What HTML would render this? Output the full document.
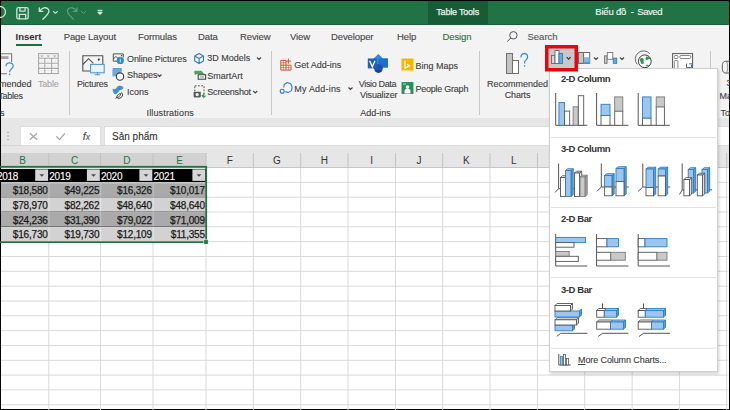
<!DOCTYPE html>
<html><head><meta charset="utf-8">
<style>
html,body{margin:0;padding:0;}
body{width:730px;height:410px;position:relative;overflow:hidden;background:#000;font-family:"Liberation Sans",sans-serif;}
.a{position:absolute;}
.t{position:absolute;white-space:nowrap;font-family:"Liberation Sans",sans-serif;line-height:1;-webkit-text-stroke:0.12px;}
svg{position:absolute;left:0;top:0;overflow:visible;}
</style></head><body>

<div class="a" style="left:1px;top:1px;width:728px;height:408px;background:#fff;"></div>
<div class="a" style="left:1px;top:1px;width:728px;height:23.8px;background:#217346;"></div>
<div class="a" style="left:428px;top:1px;width:60px;height:23.8px;background:#185c37;"></div>
<div class="a" style="left:1px;top:23.8px;width:728px;height:1px;background:#1a6038;"></div>
<div class="a" style="left:1px;top:24.8px;width:728px;height:93.2px;background:#f3f3f3;"></div>
<div class="a" style="left:1px;top:25px;width:728px;height:1px;background:#fafdfb;"></div>
<div class="a" style="left:1px;top:118px;width:728px;height:49px;background:#e6e6e6;"></div>
<div class="t" style="left:436.3px;top:7.80px;font-size:9px;color:#e9f2ec;letter-spacing:-0.2px;-webkit-text-stroke:0.25px #e9f2ec;">Table Tools</div>
<div class="t" style="left:595.3px;top:6.55px;font-size:9.5px;color:#f4f8f5;letter-spacing:-0.2px;">Biểu đồ</div>
<div class="t" style="left:630.8px;top:6.55px;font-size:9.5px;color:#f4f8f5;">-</div>
<div class="t" style="left:637.3px;top:6.55px;font-size:9.5px;color:#f4f8f5;letter-spacing:-0.45px;">Saved</div>
<svg width="730" height="410" viewBox="0 0 730 410">
<g fill="none" stroke="#cde6d6" stroke-width="1.3" stroke-linejoin="round" stroke-linecap="round">
 <circle cx="0" cy="12" r="5.5"/>
 <rect x="16.8" y="7.7" width="11.4" height="11.2" rx="1.6"/>
 <path d="M19.9 7.9v3.2h5.2v-3.2 M19.3 18.7v-4.3h6.4v4.3"/>
 <path d="M39.3 7.8v3.5h3.6 M39.8 10.9c2.3-3.2 5.8-4 8-2.2c2.2 1.8 1.5 4.8-5 10.5"/>
 <path d="M53.4 11.5l2 1.8 2-1.8" stroke-width="1.1"/>
</g>
<g fill="none" stroke="#5f9f7c" stroke-width="1.2" stroke-linejoin="round" stroke-linecap="round">
 <path d="M77 7.8v3.5h-3.6 M76.5 10.9c-2.3-3.2-5.8-4-8-2.2c-2.2 1.8-1.5 4.8 5 10.5"/>
 <path d="M81.5 11.5l2 1.8 2-1.8" stroke-width="1"/>
</g>
<path d="M97.5 10.3h5 M97.8 12.2h4.4l-2.2 2.4z" stroke="#e8f1ec" fill="#e8f1ec" stroke-width="1"/>
</svg>
<div class="t" style="left:15.6px;top:31.75px;font-size:9.5px;color:#303030;font-weight:bold;letter-spacing:0px;-webkit-text-stroke:0;">Insert</div>
<div class="t" style="left:63.7px;top:31.55px;font-size:9.5px;color:#444;letter-spacing:-0.1px;">Page Layout</div>
<div class="t" style="left:138px;top:31.55px;font-size:9.5px;color:#444;letter-spacing:-0.1px;">Formulas</div>
<div class="t" style="left:198px;top:31.55px;font-size:9.5px;color:#444;letter-spacing:-0.1px;">Data</div>
<div class="t" style="left:240px;top:31.55px;font-size:9.5px;color:#444;letter-spacing:-0.1px;">Review</div>
<div class="t" style="left:290px;top:31.55px;font-size:9.5px;color:#444;letter-spacing:-0.1px;">View</div>
<div class="t" style="left:331px;top:31.55px;font-size:9.5px;color:#444;letter-spacing:-0.1px;">Developer</div>
<div class="t" style="left:397px;top:31.55px;font-size:9.5px;color:#444;letter-spacing:-0.1px;">Help</div>
<div class="t" style="left:442.5px;top:31.55px;font-size:9.5px;color:#217346;letter-spacing:-0.1px;">Design</div>
<div class="a" style="left:15.8px;top:44px;width:26.6px;height:2px;background:#1d6b40;"></div>
<svg width="730" height="410"><g fill="none" stroke="#555" stroke-width="1"><circle cx="513.4" cy="35.3" r="3.7"/><path d="M510.8 38l-3.6 3.6"/></g></svg>
<div class="t" style="left:527.5px;top:32.25px;font-size:9.5px;color:#555;letter-spacing:0px;">Search</div>
<svg width="730" height="410"><g stroke="#c8c8c8" stroke-width="1">
<path d="M69.5 51v64 M271.5 51v64 M479.5 51v64 M710.5 51v64"/></g></svg>
<svg width="730" height="410">
<g fill="none" stroke="#7a7a7a" stroke-width="1.1"><path d="M1 53.8H11.6V62 M1 73.8H7"/></g>
<rect x="1" y="56.2" width="7.5" height="2.8" fill="#a3a3a3"/>
<path d="M6 66.3c0-2.3 1.6-3.5 3.6-3.5s3.6 1.3 3.6 3.2c0 2.6-3.6 3.2-3.6 5.6v0.6" fill="none" stroke="#3d8fd1" stroke-width="1.2"/>
<circle cx="9.6" cy="74.4" r="0.8" fill="#3d8fd1"/>
</svg>
<div class="t" style="left:-1px;top:79.90px;font-size:9px;color:#404040;">mended</div>
<div class="t" style="left:-1.8px;top:91.90px;font-size:9px;color:#404040;letter-spacing:-0.25px;">Tables</div>
<div class="t" style="left:0px;top:109.30px;font-size:9px;color:#404040;">s</div>
<svg width="730" height="410">
<rect x="38.6" y="58.3" width="19.6" height="15.2" fill="#fbfbfb"/>
<g fill="none" stroke="#e0e0e0" stroke-width="0.5"><path d="M38.6 60.8h19.6 M38.6 65.8h19.6 M38.6 70.9h19.6 M41.7 58.3v15.2 M48.1 58.3v15.2 M55 58.3v15.2"/></g>
<g fill="none" stroke="#a8a8a8" stroke-width="1.1">
<rect x="38.6" y="53.6" width="19.6" height="19.9"/>
<path d="M38.6 58.3h19.6 M38.6 63.3h19.6 M38.6 68.4h19.6 M44.8 58.3v15.2 M51.6 58.3v15.2"/></g>
<g fill="#a8a8a8"><path d="M40.3 55.5h3.2l-1.6 1.8z M46.6 55.5h3.2l-1.6 1.8z M53.2 55.5h3.2l-1.6 1.8z"/></g></svg>
<div class="t" style="left:37.9px;top:79.90px;font-size:9px;color:#a6a6a6;letter-spacing:-0.15px;">Table</div>
<svg width="730" height="410">
<g fill="none" stroke="#505050" stroke-width="1.1"><path d="M90 71H82.8V55.8H102.8V64"/><path d="M82.8 64.5l5.8-5.8 4.8 4.6"/></g>
<circle cx="98.8" cy="59.6" r="1.1" fill="#333"/>
<rect x="90.6" y="64.4" width="13.6" height="8.4" fill="#eaf3fb" stroke="#4d9ad8" stroke-width="1.1"/>
<path d="M97.4 72.8v1.8 M94.6 74.8h5.6" stroke="#4d9ad8" stroke-width="1.1" fill="none"/>
</svg>
<div class="t" style="left:77px;top:79.90px;font-size:9px;color:#404040;letter-spacing:-0.2px;">Pictures</div>
<svg width="730" height="410">
<g fill="none" stroke="#505050" stroke-width="1"><path d="M118 61.2h-4.7V53.9h10v3.5"/><path d="M113.3 59l2.6-2.6 1.8 1.8"/></g>
<circle cx="121.6" cy="55.6" r="0.7" fill="#333"/>
<circle cx="120.3" cy="60.4" r="3.6" fill="#2b88d8"/><path d="M120.3 59.2v3.2 M120.3 57.6v0.6" stroke="#fff" stroke-width="0.9"/>
<path d="M113 76.3V68.6h8.2v3" fill="#5ea3e0" stroke="#2e7dc4" stroke-width="0.8"/>
<rect x="113" y="68.6" width="7.6" height="7.6" fill="#6aaae3"/>
<circle cx="120" cy="76.6" r="3.7" fill="#fff" stroke="#3f3f3f" stroke-width="1.1"/>
<path d="M112.8 89.2c1.6 0.6 3.2 0.2 3.9-1.2c0.8-1.6 2.2-2.3 3.8-1.9c1.2 0.3 2.2 0.9 2.9 1.8l-1.9 1.6c-1.2-0.2-2.2 0.4-2.8 1.4c-1 1.8-2.6 3-4.4 3c-0.6-1.3-1.2-2.8-1.5-4.7z" fill="#3b8fd8" stroke="#2b7cc8" stroke-width="0.5"/>
<path d="M121.6 92.4a3.4 3.4 0 1 1-5.2 4.8" fill="none" stroke="#444" stroke-width="1"/>
<path d="M116.5 97.8c0.3-2.4 2-4 4.3-4.3c-0.3 2.3-2 4-4.3 4.3z M115.6 98.6l2-2" fill="none" stroke="#444" stroke-width="0.9"/>
</svg>
<div class="t" style="left:127px;top:54.90px;font-size:9px;color:#404040;letter-spacing:-0.1px;">Online Pictures</div>
<div class="t" style="left:127px;top:71.40px;font-size:9px;color:#404040;">Shapes</div>
<div class="t" style="left:127px;top:88.20px;font-size:9px;color:#404040;">Icons</div>
<div class="t" style="left:146.5px;top:109.30px;font-size:9px;color:#404040;letter-spacing:0.15px;">Illustrations</div>
<svg width="730" height="410"><path d="M157.5 74.5l2 2 2-2" fill="none" stroke="#444" stroke-width="1.15"/></svg>
<svg width="730" height="410">
<g fill="none" stroke="#2e7dc4" stroke-width="1.1" stroke-linejoin="round"><path d="M199.1 53.4l4.4 2.5v5l-4.4 2.5-4.4-2.5v-5z M194.7 55.9l4.4 2.5 4.4-2.5 M199.1 58.4v5"/></g>
<path d="M194.3 70.8h7.2l2.8 3.3h-7z" fill="#3fae5a"/>
<path d="M194.3 70.8l3 3.3-2.6 0.6z" fill="#2f8f47"/>
<rect x="198.2" y="74.7" width="7.4" height="4.5" fill="#fff" stroke="#454545" stroke-width="1.1"/>
<path d="M199.8 77h4.2" stroke="#666" stroke-width="0.8"/>
<rect x="194.8" y="85.8" width="9.2" height="9.6" fill="none" stroke="#555" stroke-width="1" stroke-dasharray="1.8 1.4"/>
<rect x="193.6" y="91.8" width="7.2" height="5.6" rx="0.8" fill="#5a5a5a"/>
<circle cx="197.2" cy="94.6" r="1.6" fill="#f3f3f3"/>
<path d="M203.8 93v4.3 M202 95.6l1.8 1.8 1.8-1.8" stroke="#2f9f4f" stroke-width="1.1" fill="none"/>
</svg>
<div class="t" style="left:207.3px;top:54.40px;font-size:9px;color:#404040;">3D Models</div>
<svg width="730" height="410"><path d="M257 57.5l2 2 2-2" fill="none" stroke="#444" stroke-width="1.15"/></svg>
<div class="t" style="left:207.3px;top:71.70px;font-size:9px;color:#404040;">SmartArt</div>
<div class="t" style="left:207.3px;top:88.20px;font-size:9px;color:#404040;letter-spacing:-0.2px;">Screenshot</div>
<svg width="730" height="410"><path d="M253.3 91l2 2 2-2" fill="none" stroke="#444" stroke-width="1.15"/></svg>
<svg width="730" height="410">
<g fill="none" stroke="#d35230" stroke-width="1"><path d="M280.8 60.4h5.2v4.8h5v4.9h-10.2z M280.8 65.2h5.2v4.9"/><path d="M283.4 60.4v9.7 M280.8 62.8h5.2 M280.8 67.6h10.2 M288.5 65.2v4.9" stroke-width="0.6"/><path d="M288.4 58.6v5 M285.9 61.1h5"/></g>
<g fill="none" stroke="#2b7cd0" stroke-width="1.1" stroke-linejoin="round"><path d="M283.8 87.5l0.4-3 3-2 3.6 1.2 1.3 3.5-0.6 3.4-3 1.8-3.4-0.6"/><circle cx="282.2" cy="91.2" r="2"/></g>
<path d="M373.5 58.6l4.9-4.6 4.6 4.6h5v8.8h-5l-4.6 4.6-4.9-4.6z" fill="#2f8ae0"/>
<path d="M378.4 58.6h9.6v8.8h-5l-4.6 4.6z" fill="#1f6fc8"/>
<circle cx="378.4" cy="68.3" r="4.3" fill="#1d52a8"/>
<path d="M374.5 70.2a4.3 4.3 0 0 0 8 0z" fill="#163f8a"/>
<rect x="367.8" y="58.5" width="8.9" height="9.9" fill="#1f5fbf"/>
<path d="M369.6 60.8l2.7 6 2.7-6" fill="none" stroke="#fff" stroke-width="1.3"/>
<rect x="401.5" y="58.5" width="12" height="12" fill="#f5b800"/>
<path d="M405 60.8v7.5l4.5-2.5-2.5-1.5" fill="none" stroke="#fff" stroke-width="1.3"/>
<rect x="401.5" y="82" width="12" height="12" fill="#21a366"/>
<rect x="402" y="82.5" width="11" height="11" fill="#2e8b57"/>
<circle cx="407.5" cy="87" r="1.8" fill="#fff"/><path d="M404.5 93.5v-2.5c0-1.5 1.3-2.5 3-2.5s3 1 3 2.5v2.5z" fill="#fff"/>
<path d="M403 84h3" stroke="#cfe" stroke-width="0.8"/>
</svg>
<div class="t" style="left:294.3px;top:61.30px;font-size:9px;color:#404040;">Get Add-ins</div>
<div class="t" style="left:294.3px;top:85.10px;font-size:9px;color:#404040;letter-spacing:0.2px;">My Add-ins</div>
<svg width="730" height="410"><path d="M348.5 87.5l2 2 2-2" fill="none" stroke="#444" stroke-width="1.15"/></svg>
<div class="t" style="left:358.8px;top:79.60px;font-size:9px;color:#404040;letter-spacing:-0.35px;">Visio Data</div>
<div class="t" style="left:360px;top:91.30px;font-size:9px;color:#404040;letter-spacing:-0.15px;">Visualizer</div>
<div class="t" style="left:360.2px;top:109.30px;font-size:9px;color:#404040;">Add-ins</div>
<div class="t" style="left:415.6px;top:61.70px;font-size:9px;color:#404040;">Bing Maps</div>
<div class="t" style="left:415.6px;top:85.10px;font-size:9px;color:#404040;letter-spacing:-0.25px;">People Graph</div>
<svg width="730" height="410">
<rect x="506.5" y="53.5" width="6" height="20" fill="#c4c4c4" stroke="#707070" stroke-width="1"/>
<rect x="512.5" y="60.5" width="6" height="13" fill="#fff" stroke="#707070" stroke-width="1"/>
<path d="M521 57.5c0-2.5 1.5-3.8 3.3-3.8s3.3 1.3 3.3 3.5c0 2.5-3 2.8-3 5v1.2 M524.6 65.2v1.5" fill="none" stroke="#2e8ad8" stroke-width="1.2"/>
</svg>
<div class="t" style="left:487px;top:79.60px;font-size:9px;color:#404040;">Recommended</div>
<div class="t" style="left:504.7px;top:91.30px;font-size:9px;color:#404040;letter-spacing:-0.15px;">Charts</div>
<svg width="730" height="410">
<rect x="578.5" y="52.5" width="11.2" height="10.8" fill="#fff" stroke="#6a6a6a" stroke-width="1"/>
<rect x="578.5" y="52.5" width="5" height="10.8" fill="#c6c6c6" stroke="#6a6a6a" stroke-width="1"/>
<rect x="583.8" y="57.2" width="5.6" height="5.8" fill="#7fb8ea"/>
<path d="M583.8 63h5.9" stroke="#3a8ad6" stroke-width="1.2"/>
<rect x="604.5" y="55.8" width="2.6" height="7.5" fill="#c6c6c6" stroke="#777" stroke-width="0.9"/>
<rect x="607.3" y="52.5" width="5.5" height="6.8" fill="#fff" stroke="#777" stroke-width="0.9"/>
<rect x="613.3" y="58.2" width="3.4" height="5.1" fill="#6aaae3" stroke="#2e7dc4" stroke-width="0.9"/>
<path d="M637.3 64.5a8 8 0 0 1 12.5-10.8" fill="none" stroke="#6a6a6a" stroke-width="1"/>
<circle cx="644.8" cy="61.3" r="6.4" fill="#fff" stroke="#3a3a3a" stroke-width="1"/>
<path d="M640.2 58.6c1.2-1 2.8-1 3.4 0.3c0.5 1-0.6 2.1 0.1 3c0.6 0.8-0.2 2.2-1.3 2.2c-1 0-1.3-1.3-1.8-2.2c-0.5-1-1.4-2-0.4-3.3z" fill="#2c9a4c"/>
<path d="M646 56.5c1.6-0.3 3.4 0.5 4.2 2.2c-0.8 0.6-2 0.2-2.6 1c-0.5 0.6-1.8 0.3-2-0.8c-0.2-0.9 0.6-1.2 0.4-2.4z" fill="#2c9a4c"/>
<path d="M645.5 65.3c1-0.8 2.8-0.8 3.6 0.3c-0.9 0.9-2.4 1.2-3.6-0.3z" fill="#2c9a4c"/>
<rect x="672.6" y="53.6" width="20" height="16" fill="#fff" stroke="#555" stroke-width="1"/>
<g fill="none" stroke="#777" stroke-width="0.9"><rect x="674.3" y="55.5" width="3.6" height="3" rx="0.8"/><rect x="679.8" y="55.5" width="11" height="3" rx="1.2"/><rect x="674.3" y="60.6" width="3.6" height="8" rx="0.8"/></g>
<path d="M686.5 63.5v4h5v-2.5" fill="#fff" stroke="#555" stroke-width="0.9"/>
<path d="M689 63.8h3v3" fill="none" stroke="#2e7dc4" stroke-width="1"/>
<path d="M730 61.3h-4.5c-2.2 0-3.2 1.5-3.2 5.8s1 5.9 3.2 5.9h4.5" fill="none" stroke="#555" stroke-width="1"/>
<path d="M725.5 61.3c1.5 0 2.2 2.5 2.2 5.9s-0.7 5.9-2.2 5.9" fill="none" stroke="#777" stroke-width="0.8"/>
</svg>
<svg width="730" height="410"><path d="M594 57.5l2 2 2-2" fill="none" stroke="#444" stroke-width="1.15"/></svg>
<svg width="730" height="410"><path d="M620 57.5l2 2 2-2" fill="none" stroke="#444" stroke-width="1.15"/></svg>
<div class="t" style="left:726.5px;top:79.40px;font-size:9px;color:#404040;">3</div>
<div class="t" style="left:719.5px;top:91.90px;font-size:9px;color:#404040;">Ma</div>
<div class="t" style="left:720.5px;top:108.90px;font-size:9px;color:#404040;">To</div>
<div class="a" style="left:1px;top:145px;width:728px;height:1px;background:#d6d6d6;"></div>
<div class="a" style="left:19.5px;top:126.4px;width:81px;height:19.6px;background:#fff;border:1px solid #dcdcdc;box-sizing:border-box;"></div>
<div class="a" style="left:103.5px;top:126.4px;width:625.5px;height:19.6px;background:#fff;border:1px solid #dcdcdc;border-right:none;box-sizing:border-box;"></div>
<svg width="730" height="410">
<g fill="#9a9a9a"><circle cx="8" cy="132.5" r="0.7"/><circle cx="8" cy="136" r="0.7"/><circle cx="8" cy="139.5" r="0.7"/></g>
<g fill="none" stroke="#a6a6a6" stroke-width="1.25"><path d="M29.8 133.2l7.2 6.6 M37 133.2l-7.2 6.6"/><path d="M56.3 136.3l3.2 3.3 5.3-6.3"/></g>
</svg>
<div class="t" style="left:82.8px;top:130.80px;font-size:11px;color:#505050;font-family:"Liberation Serif",serif;-webkit-text-stroke:0.25px;"><i>f</i><span style="font-size:8.5px"><i>x</i></span></div>
<div class="t" style="left:112px;top:131.80px;font-size:10px;color:#333;">Sản phẩm</div>
<div class="a" style="left:1px;top:153px;width:205px;height:14.5px;background:#d2d2d2;"></div>
<svg width="730" height="410">
<path d="M48.8 153v14.5" stroke="#c2c2c2" stroke-width="1"/>
<path d="M100.5 153v14.5" stroke="#c2c2c2" stroke-width="1"/>
<path d="M153.0 153v14.5" stroke="#c2c2c2" stroke-width="1"/>
<path d="M206.0 153v14.5" stroke="#c2c2c2" stroke-width="1"/>
<path d="M253.3 153v14.5" stroke="#c2c2c2" stroke-width="1"/>
<path d="M300.7 153v14.5" stroke="#c2c2c2" stroke-width="1"/>
<path d="M348.0 153v14.5" stroke="#c2c2c2" stroke-width="1"/>
<path d="M395.4 153v14.5" stroke="#c2c2c2" stroke-width="1"/>
<path d="M442.7 153v14.5" stroke="#c2c2c2" stroke-width="1"/>
<path d="M490.0 153v14.5" stroke="#c2c2c2" stroke-width="1"/>
<path d="M537.4 153v14.5" stroke="#c2c2c2" stroke-width="1"/>
<path d="M584.7 153v14.5" stroke="#c2c2c2" stroke-width="1"/>
<path d="M632.1 153v14.5" stroke="#c2c2c2" stroke-width="1"/>
<path d="M679.4 153v14.5" stroke="#c2c2c2" stroke-width="1"/>
<path d="M726.7 153v14.5" stroke="#c2c2c2" stroke-width="1"/>
<path d="M1 167.5h728" stroke="#c6c6c6" stroke-width="1"/>
<path d="M48.8 168v242" stroke="#d9d9d9" stroke-width="1"/>
<path d="M100.5 168v242" stroke="#d9d9d9" stroke-width="1"/>
<path d="M153.0 168v242" stroke="#d9d9d9" stroke-width="1"/>
<path d="M206.0 168v242" stroke="#d9d9d9" stroke-width="1"/>
<path d="M253.3 168v242" stroke="#d9d9d9" stroke-width="1"/>
<path d="M300.7 168v242" stroke="#d9d9d9" stroke-width="1"/>
<path d="M348.0 168v242" stroke="#d9d9d9" stroke-width="1"/>
<path d="M395.4 168v242" stroke="#d9d9d9" stroke-width="1"/>
<path d="M442.7 168v242" stroke="#d9d9d9" stroke-width="1"/>
<path d="M490.0 168v242" stroke="#d9d9d9" stroke-width="1"/>
<path d="M537.4 168v242" stroke="#d9d9d9" stroke-width="1"/>
<path d="M584.7 168v242" stroke="#d9d9d9" stroke-width="1"/>
<path d="M632.1 168v242" stroke="#d9d9d9" stroke-width="1"/>
<path d="M679.4 168v242" stroke="#d9d9d9" stroke-width="1"/>
<path d="M726.7 168v242" stroke="#d9d9d9" stroke-width="1"/>
<path d="M1 182.3h728" stroke="#d9d9d9" stroke-width="1"/>
<path d="M1 197.2h728" stroke="#d9d9d9" stroke-width="1"/>
<path d="M1 212.0h728" stroke="#d9d9d9" stroke-width="1"/>
<path d="M1 226.8h728" stroke="#d9d9d9" stroke-width="1"/>
<path d="M1 241.7h728" stroke="#d9d9d9" stroke-width="1"/>
<path d="M1 256.5h728" stroke="#d9d9d9" stroke-width="1"/>
<path d="M1 271.3h728" stroke="#d9d9d9" stroke-width="1"/>
<path d="M1 286.1h728" stroke="#d9d9d9" stroke-width="1"/>
<path d="M1 301.0h728" stroke="#d9d9d9" stroke-width="1"/>
<path d="M1 315.8h728" stroke="#d9d9d9" stroke-width="1"/>
<path d="M1 330.6h728" stroke="#d9d9d9" stroke-width="1"/>
<path d="M1 345.5h728" stroke="#d9d9d9" stroke-width="1"/>
<path d="M1 360.3h728" stroke="#d9d9d9" stroke-width="1"/>
<path d="M1 375.1h728" stroke="#d9d9d9" stroke-width="1"/>
<path d="M1 389.9h728" stroke="#d9d9d9" stroke-width="1"/>
<path d="M1 404.8h728" stroke="#d9d9d9" stroke-width="1"/>
<path d="M1 419.6h728" stroke="#d9d9d9" stroke-width="1"/>
</svg>
<div class="t" style="left:7.6px;width:30px;text-align:center;top:156.0px;font-size:10px;color:#217346;-webkit-text-stroke:0;">B</div>
<div class="t" style="left:59.7px;width:30px;text-align:center;top:156.0px;font-size:10px;color:#217346;-webkit-text-stroke:0;">C</div>
<div class="t" style="left:111.8px;width:30px;text-align:center;top:156.0px;font-size:10px;color:#217346;-webkit-text-stroke:0;">D</div>
<div class="t" style="left:164.5px;width:30px;text-align:center;top:156.0px;font-size:10px;color:#217346;-webkit-text-stroke:0;">E</div>
<div class="t" style="left:214.7px;width:30px;text-align:center;top:156.0px;font-size:10px;color:#333;-webkit-text-stroke:0;">F</div>
<div class="t" style="left:262.0px;width:30px;text-align:center;top:156.0px;font-size:10px;color:#333;-webkit-text-stroke:0;">G</div>
<div class="t" style="left:309.4px;width:30px;text-align:center;top:156.0px;font-size:10px;color:#333;-webkit-text-stroke:0;">H</div>
<div class="t" style="left:356.7px;width:30px;text-align:center;top:156.0px;font-size:10px;color:#333;-webkit-text-stroke:0;">I</div>
<div class="t" style="left:404.0px;width:30px;text-align:center;top:156.0px;font-size:10px;color:#333;-webkit-text-stroke:0;">J</div>
<div class="t" style="left:451.4px;width:30px;text-align:center;top:156.0px;font-size:10px;color:#333;-webkit-text-stroke:0;">K</div>
<div class="t" style="left:498.7px;width:30px;text-align:center;top:156.0px;font-size:10px;color:#333;-webkit-text-stroke:0;">L</div>
<div class="t" style="left:546.1px;width:30px;text-align:center;top:156.0px;font-size:10px;color:#333;-webkit-text-stroke:0;">M</div>
<svg width="730" height="410">
<rect x="1" y="168" width="205" height="1" fill="#e4e4e4"/>
<rect x="1" y="169" width="205" height="13.2" fill="#000"/>
<rect x="1" y="182.2" width="205" height="1" fill="#c8c8c8"/>
<rect x="1" y="183.2" width="205" height="13.5" fill="#aaaaaa"/>
<rect x="1" y="196.7" width="205" height="1" fill="#6a6a6a"/>
<rect x="1" y="197.7" width="205" height="13.8" fill="#d2d2d2"/>
<rect x="1" y="211.4" width="205" height="1" fill="#6a6a6a"/>
<rect x="1" y="212.3" width="205" height="13.8" fill="#aaaaaa"/>
<rect x="1" y="226.1" width="205" height="1" fill="#6a6a6a"/>
<rect x="1" y="227.1" width="205" height="14.4" fill="#d2d2d2"/>
<rect x="48.5" y="197.7" width="1" height="13.8" fill="#e6e6e6"/>
<rect x="48.5" y="227.1" width="1" height="14.4" fill="#e6e6e6"/>
<rect x="48.5" y="183.2" width="1" height="13.5" fill="#c2c2c2"/>
<rect x="48.5" y="212.4" width="1" height="13.7" fill="#c2c2c2"/>
<rect x="100.2" y="197.7" width="1" height="13.8" fill="#e6e6e6"/>
<rect x="100.2" y="227.1" width="1" height="14.4" fill="#e6e6e6"/>
<rect x="100.2" y="183.2" width="1" height="13.5" fill="#c2c2c2"/>
<rect x="100.2" y="212.4" width="1" height="13.7" fill="#c2c2c2"/>
<rect x="152.7" y="197.7" width="1" height="13.8" fill="#e6e6e6"/>
<rect x="152.7" y="227.1" width="1" height="14.4" fill="#e6e6e6"/>
<rect x="152.7" y="183.2" width="1" height="13.5" fill="#c2c2c2"/>
<rect x="152.7" y="212.4" width="1" height="13.7" fill="#c2c2c2"/>
<rect x="35.2" y="169.4" width="12.9" height="11.5" fill="#d6d6d6"/>
<path d="M39.3 174.2h5l-2.5 2.6z" fill="#4a4a4a"/>
<rect x="86.9" y="169.4" width="12.9" height="11.5" fill="#d6d6d6"/>
<path d="M91.0 174.2h5l-2.5 2.6z" fill="#4a4a4a"/>
<rect x="139.4" y="169.4" width="12.9" height="11.5" fill="#d6d6d6"/>
<path d="M143.5 174.2h5l-2.5 2.6z" fill="#4a4a4a"/>
<rect x="192.4" y="169.4" width="12.9" height="11.5" fill="#d6d6d6"/>
<path d="M196.5 174.2h5l-2.5 2.6z" fill="#4a4a4a"/>
</svg>
<div class="t" style="left:-3.1px;top:172.10px;font-size:10px;color:#fff;letter-spacing:-0.25px;">2018</div>
<div class="t" style="left:49.3px;top:172.10px;font-size:10px;color:#fff;letter-spacing:-0.25px;">2019</div>
<div class="t" style="left:101.0px;top:172.10px;font-size:10px;color:#fff;letter-spacing:-0.25px;">2020</div>
<div class="t" style="left:153.5px;top:172.10px;font-size:10px;color:#fff;letter-spacing:-0.25px;">2021</div>
<div class="t" style="right:682.4px;top:186.4px;font-size:10px;color:#1a1a1a;letter-spacing:-0.2px;-webkit-text-stroke:0.25px #1a1a1a;">$18,580</div>
<div class="t" style="right:630.7px;top:186.4px;font-size:10px;color:#1a1a1a;letter-spacing:-0.2px;-webkit-text-stroke:0.25px #1a1a1a;">$49,225</div>
<div class="t" style="right:578.2px;top:186.4px;font-size:10px;color:#1a1a1a;letter-spacing:-0.2px;-webkit-text-stroke:0.25px #1a1a1a;">$16,326</div>
<div class="t" style="right:525.2px;top:186.4px;font-size:10px;color:#1a1a1a;letter-spacing:-0.2px;-webkit-text-stroke:0.25px #1a1a1a;">$10,017</div>
<div class="t" style="right:682.4px;top:201.0px;font-size:10px;color:#1a1a1a;letter-spacing:-0.2px;-webkit-text-stroke:0.25px #1a1a1a;">$78,970</div>
<div class="t" style="right:630.7px;top:201.0px;font-size:10px;color:#1a1a1a;letter-spacing:-0.2px;-webkit-text-stroke:0.25px #1a1a1a;">$82,262</div>
<div class="t" style="right:578.2px;top:201.0px;font-size:10px;color:#1a1a1a;letter-spacing:-0.2px;-webkit-text-stroke:0.25px #1a1a1a;">$48,640</div>
<div class="t" style="right:525.2px;top:201.0px;font-size:10px;color:#1a1a1a;letter-spacing:-0.2px;-webkit-text-stroke:0.25px #1a1a1a;">$48,640</div>
<div class="t" style="right:682.4px;top:215.6px;font-size:10px;color:#1a1a1a;letter-spacing:-0.2px;-webkit-text-stroke:0.25px #1a1a1a;">$24,236</div>
<div class="t" style="right:630.7px;top:215.6px;font-size:10px;color:#1a1a1a;letter-spacing:-0.2px;-webkit-text-stroke:0.25px #1a1a1a;">$31,390</div>
<div class="t" style="right:578.2px;top:215.6px;font-size:10px;color:#1a1a1a;letter-spacing:-0.2px;-webkit-text-stroke:0.25px #1a1a1a;">$79,022</div>
<div class="t" style="right:525.2px;top:215.6px;font-size:10px;color:#1a1a1a;letter-spacing:-0.2px;-webkit-text-stroke:0.25px #1a1a1a;">$71,009</div>
<div class="t" style="right:682.4px;top:230.2px;font-size:10px;color:#1a1a1a;letter-spacing:-0.2px;-webkit-text-stroke:0.25px #1a1a1a;">$16,730</div>
<div class="t" style="right:630.7px;top:230.2px;font-size:10px;color:#1a1a1a;letter-spacing:-0.2px;-webkit-text-stroke:0.25px #1a1a1a;">$19,730</div>
<div class="t" style="right:578.2px;top:230.2px;font-size:10px;color:#1a1a1a;letter-spacing:-0.2px;-webkit-text-stroke:0.25px #1a1a1a;">$12,109</div>
<div class="t" style="right:525.2px;top:230.2px;font-size:10px;color:#1a1a1a;letter-spacing:-0.2px;-webkit-text-stroke:0.25px #1a1a1a;">$11,355</div>
<svg width="730" height="410"><rect x="-3" y="166.8" width="209.2" height="75.4" fill="none" stroke="#217346" stroke-width="1.8"/>
<rect x="203.8" y="239.8" width="4.4" height="4.4" fill="#217346" stroke="#fff" stroke-width="0.6"/></svg>
<div class="a" style="left:549px;top:67.5px;width:168.5px;height:304.7px;background:#fff;border:1px solid #d0d0d0;box-sizing:border-box;box-shadow:1px 2px 3px rgba(0,0,0,0.18);"></div>
<div class="t" style="left:561px;top:73.55px;font-size:9.5px;color:#333;font-weight:bold;letter-spacing:-0.42px;-webkit-text-stroke:0;">2-D Column</div>
<div class="t" style="left:561px;top:143.75px;font-size:9.5px;color:#333;font-weight:bold;letter-spacing:-0.42px;-webkit-text-stroke:0;">3-D Column</div>
<div class="t" style="left:561px;top:213.75px;font-size:9.5px;color:#333;font-weight:bold;letter-spacing:-0.42px;-webkit-text-stroke:0;">2-D Bar</div>
<div class="t" style="left:561px;top:284.55px;font-size:9.5px;color:#333;font-weight:bold;letter-spacing:-0.42px;-webkit-text-stroke:0;">3-D Bar</div>
<svg width="730" height="410">
<path d="M551 137.5h165" stroke="#e1e1e1" stroke-width="1"/>
<path d="M551 207.5h165" stroke="#e1e1e1" stroke-width="1"/>
<path d="M551 277.5h165" stroke="#e1e1e1" stroke-width="1"/>
<path d="M551 348.2h165" stroke="#e1e1e1" stroke-width="1"/>
<path d="M555.7 93v32.3h31.6" stroke="#555" stroke-width="1" fill="none"/>
<rect x="558.9" y="102.6" width="5.70" height="22.70" fill="#9cc6ee" stroke="#2e7dc4" stroke-width="0.9"/>
<rect x="564.6" y="111.1" width="5.10" height="14.20" fill="#fff" stroke="#555" stroke-width="0.9"/>
<rect x="573.1" y="106.8" width="5.20" height="18.50" fill="#c9c9c9" stroke="#7a7a7a" stroke-width="0.9"/>
<rect x="578.3" y="95.7" width="5.40" height="29.60" fill="#fff" stroke="#555" stroke-width="0.9"/>
<path d="M596.6 93v32.3h31.8" stroke="#555" stroke-width="1" fill="none"/>
<rect x="601" y="115.4" width="9.00" height="9.90" fill="#fff" stroke="#555" stroke-width="0.9"/>
<rect x="601" y="104.3" width="9.00" height="11.10" fill="#9cc6ee" stroke="#2e7dc4" stroke-width="0.9"/>
<rect x="614.7" y="111.1" width="8.10" height="14.20" fill="#fff" stroke="#555" stroke-width="0.9"/>
<rect x="614.7" y="96.9" width="8.10" height="14.20" fill="#c9c9c9" stroke="#7a7a7a" stroke-width="0.9"/>
<path d="M638.2 93v32.3h31.7" stroke="#555" stroke-width="1" fill="none"/>
<rect x="642.5" y="118" width="8.50" height="7.30" fill="#fff" stroke="#555" stroke-width="0.9"/>
<rect x="642.5" y="96.9" width="8.50" height="21.10" fill="#9cc6ee" stroke="#2e7dc4" stroke-width="0.9"/>
<rect x="656.2" y="106.8" width="8.20" height="18.50" fill="#fff" stroke="#555" stroke-width="0.9"/>
<rect x="656.2" y="96.9" width="8.20" height="9.90" fill="#c9c9c9" stroke="#7a7a7a" stroke-width="0.9"/>
<path d="M558.6 163.5v25.2l-3.6 3.8 M558.6 188.7h28.5" stroke="#555" stroke-width="1" fill="none"/>
<path d="M565.5 177.5 l2.2 -1.7600000000000002 V194.64000000000001 l-2.2 1.7600000000000002z" fill="#e0e0e0" stroke="#555" stroke-width="0.9"/>
<path d="M560.5 177.5 l2.2 -1.7600000000000002 H567.7 l-2.2 1.7600000000000002z" fill="#fff" stroke="#555" stroke-width="0.9"/>
<rect x="560.5" y="177.5" width="5.00" height="18.90" fill="#fff" stroke="#555" stroke-width="0.9"/>
<path d="M571 170.5 l2.2 -1.7600000000000002 V194.64000000000001 l-2.2 1.7600000000000002z" fill="#5b9bd5" stroke="#2e7dc4" stroke-width="0.9"/>
<path d="M565.5 170.5 l2.2 -1.7600000000000002 H573.2 l-2.2 1.7600000000000002z" fill="#9cc6ee" stroke="#2e7dc4" stroke-width="0.9"/>
<rect x="565.5" y="170.5" width="5.50" height="25.90" fill="#9cc6ee" stroke="#2e7dc4" stroke-width="0.9"/>
<path d="M579.5 173 l2.2 -1.7600000000000002 V194.64000000000001 l-2.2 1.7600000000000002z" fill="#e0e0e0" stroke="#555" stroke-width="0.9"/>
<path d="M574.5 173 l2.2 -1.7600000000000002 H581.7 l-2.2 1.7600000000000002z" fill="#fff" stroke="#555" stroke-width="0.9"/>
<rect x="574.5" y="173" width="5.00" height="23.40" fill="#fff" stroke="#555" stroke-width="0.9"/>
<path d="M585 177 l2.2 -1.7600000000000002 V194.64000000000001 l-2.2 1.7600000000000002z" fill="#a8a8a8" stroke="#7a7a7a" stroke-width="0.9"/>
<path d="M580 177 l2.2 -1.7600000000000002 H587.2 l-2.2 1.7600000000000002z" fill="#c9c9c9" stroke="#7a7a7a" stroke-width="0.9"/>
<rect x="580" y="177" width="5.00" height="19.40" fill="#c9c9c9" stroke="#7a7a7a" stroke-width="0.9"/>
<path d="M601.3 163.5v23.5l-4.6 4.5 M601.3 187h27.4" stroke="#555" stroke-width="1" fill="none"/>
<path d="M612 175.5 l2.2 -1.7600000000000002 V194.04000000000002 l-2.2 1.7600000000000002z" fill="#5b9bd5" stroke="#2e7dc4" stroke-width="0.9"/>
<path d="M604.6 175.5 l2.2 -1.7600000000000002 H614.2 l-2.2 1.7600000000000002z" fill="#9cc6ee" stroke="#2e7dc4" stroke-width="0.9"/>
<rect x="604.6" y="175.5" width="7.40" height="11.50" fill="#9cc6ee" stroke="#2e7dc4" stroke-width="0.9"/>
<rect x="604.6" y="187" width="7.40" height="8.80" fill="#fff" stroke="#555" stroke-width="0.9"/>
<path d="M624 168.5 l2.2 -1.7600000000000002 V194.04000000000002 l-2.2 1.7600000000000002z" fill="#5b9bd5" stroke="#2e7dc4" stroke-width="0.9"/>
<path d="M616 168.5 l2.2 -1.7600000000000002 H626.2 l-2.2 1.7600000000000002z" fill="#9cc6ee" stroke="#2e7dc4" stroke-width="0.9"/>
<rect x="616" y="168.5" width="8.00" height="13.10" fill="#9cc6ee" stroke="#2e7dc4" stroke-width="0.9"/>
<rect x="616" y="181.6" width="8.00" height="14.20" fill="#fff" stroke="#555" stroke-width="0.9"/>
<path d="M642.8 163.5v23.5l-4.8 4.5 M642.8 187h27.4" stroke="#555" stroke-width="1" fill="none"/>
<path d="M653.5 169 l2.2 -1.7600000000000002 V194.04000000000002 l-2.2 1.7600000000000002z" fill="#5b9bd5" stroke="#2e7dc4" stroke-width="0.9"/>
<path d="M646 169 l2.2 -1.7600000000000002 H655.7 l-2.2 1.7600000000000002z" fill="#9cc6ee" stroke="#2e7dc4" stroke-width="0.9"/>
<rect x="646" y="169" width="7.50" height="18.60" fill="#9cc6ee" stroke="#2e7dc4" stroke-width="0.9"/>
<rect x="646" y="187.6" width="7.50" height="8.20" fill="#fff" stroke="#555" stroke-width="0.9"/>
<path d="M665.5 169 l2.2 -1.7600000000000002 V194.04000000000002 l-2.2 1.7600000000000002z" fill="#5b9bd5" stroke="#2e7dc4" stroke-width="0.9"/>
<path d="M658.1 169 l2.2 -1.7600000000000002 H667.7 l-2.2 1.7600000000000002z" fill="#9cc6ee" stroke="#2e7dc4" stroke-width="0.9"/>
<rect x="658.1" y="169" width="7.40" height="7.00" fill="#9cc6ee" stroke="#2e7dc4" stroke-width="0.9"/>
<rect x="658.1" y="176" width="7.40" height="19.80" fill="#fff" stroke="#555" stroke-width="0.9"/>
<path d="M682.2 163.5v26.5l-2.7 4.5 M682.2 189.8h29.8" stroke="#555" stroke-width="1" fill="none"/>
<path d="M693.5 169.5 l2.2 -1.7600000000000002 V191.24 l-2.2 1.7600000000000002z" fill="#5b9bd5" stroke="#2e7dc4" stroke-width="0.9"/>
<path d="M688.2 169.5 l2.2 -1.7600000000000002 H695.7 l-2.2 1.7600000000000002z" fill="#9cc6ee" stroke="#2e7dc4" stroke-width="0.9"/>
<rect x="688.2" y="169.5" width="5.30" height="23.50" fill="#9cc6ee" stroke="#2e7dc4" stroke-width="0.9"/>
<path d="M707.5 169.5 l2.2 -1.7600000000000002 V191.24 l-2.2 1.7600000000000002z" fill="#5b9bd5" stroke="#2e7dc4" stroke-width="0.9"/>
<path d="M702 169.5 l2.2 -1.7600000000000002 H709.7 l-2.2 1.7600000000000002z" fill="#9cc6ee" stroke="#2e7dc4" stroke-width="0.9"/>
<rect x="702" y="169.5" width="5.50" height="23.50" fill="#9cc6ee" stroke="#2e7dc4" stroke-width="0.9"/>
<path d="M689.5 179.5 l2.2 -1.7600000000000002 V194.04000000000002 l-2.2 1.7600000000000002z" fill="#e0e0e0" stroke="#555" stroke-width="0.9"/>
<path d="M683.9 179.5 l2.2 -1.7600000000000002 H691.7 l-2.2 1.7600000000000002z" fill="#fff" stroke="#555" stroke-width="0.9"/>
<rect x="683.9" y="179.5" width="5.60" height="16.30" fill="#fff" stroke="#555" stroke-width="0.9"/>
<path d="M702.5 175 l2.2 -1.7600000000000002 V194.04000000000002 l-2.2 1.7600000000000002z" fill="#e0e0e0" stroke="#555" stroke-width="0.9"/>
<path d="M697.3 175 l2.2 -1.7600000000000002 H704.7 l-2.2 1.7600000000000002z" fill="#fff" stroke="#555" stroke-width="0.9"/>
<rect x="697.3" y="175" width="5.20" height="20.80" fill="#fff" stroke="#555" stroke-width="0.9"/>
<path d="M555.7 234v32h31.6" stroke="#555" stroke-width="1" fill="none"/>
<rect x="555.7" y="237.4" width="29.90" height="5.20" fill="#9cc6ee" stroke="#2e7dc4" stroke-width="0.9"/>
<rect x="555.7" y="242.6" width="18.30" height="4.60" fill="#fff" stroke="#555" stroke-width="0.9"/>
<rect x="555.7" y="251.5" width="13.50" height="4.80" fill="#c9c9c9" stroke="#7a7a7a" stroke-width="0.9"/>
<rect x="555.7" y="256.3" width="22.60" height="5.10" fill="#fff" stroke="#555" stroke-width="0.9"/>
<path d="M596.6 234v32h31.8" stroke="#555" stroke-width="1" fill="none"/>
<rect x="596.6" y="238.6" width="10.40" height="8.20" fill="#fff" stroke="#555" stroke-width="0.9"/>
<rect x="607" y="238.6" width="11.50" height="8.20" fill="#9cc6ee" stroke="#2e7dc4" stroke-width="0.9"/>
<rect x="596.6" y="252.3" width="14.20" height="7.90" fill="#fff" stroke="#555" stroke-width="0.9"/>
<rect x="610.8" y="252.3" width="14.50" height="7.90" fill="#c9c9c9" stroke="#7a7a7a" stroke-width="0.9"/>
<path d="M638.2 234v32h31.7" stroke="#555" stroke-width="1" fill="none"/>
<rect x="638.2" y="238.6" width="6.80" height="8.20" fill="#fff" stroke="#555" stroke-width="0.9"/>
<rect x="645" y="238.6" width="22.00" height="8.20" fill="#9cc6ee" stroke="#2e7dc4" stroke-width="0.9"/>
<rect x="638.2" y="252.3" width="18.80" height="7.90" fill="#fff" stroke="#555" stroke-width="0.9"/>
<rect x="657" y="252.3" width="10.00" height="7.90" fill="#c9c9c9" stroke="#7a7a7a" stroke-width="0.9"/>
<path d="M560.7 333.3h26.7 M560.7 333.3l-3.9 3" stroke="#555" stroke-width="1" fill="none"/>
<path d="M572.5 325 l2 -2 V328.8 l-2 2z" fill="#5b9bd5" stroke="#2e7dc4" stroke-width="0.9"/>
<rect x="555" y="325" width="17.50" height="5.80" fill="#9cc6ee" stroke="#2e7dc4" stroke-width="0.9"/>
<path d="M555 319.8 l2 -2 H578.5 l-2 2z" fill="#fff" stroke="#555" stroke-width="0.9"/>
<path d="M576.5 319.8 l2 -2 V323 l-2 2z" fill="#e0e0e0" stroke="#555" stroke-width="0.9"/>
<rect x="555" y="319.8" width="21.50" height="5.20" fill="#fff" stroke="#555" stroke-width="0.9"/>
<path d="M579.5 311 l2 -2 V315 l-2 2z" fill="#5b9bd5" stroke="#2e7dc4" stroke-width="0.9"/>
<rect x="555" y="311" width="24.50" height="6.00" fill="#9cc6ee" stroke="#2e7dc4" stroke-width="0.9"/>
<path d="M555 305.5 l2 -2 H572.5 l-2 2z" fill="#fff" stroke="#555" stroke-width="0.9"/>
<path d="M570.5 305.5 l2 -2 V309 l-2 2z" fill="#e0e0e0" stroke="#555" stroke-width="0.9"/>
<rect x="555" y="305.5" width="15.50" height="5.50" fill="#fff" stroke="#555" stroke-width="0.9"/>
<path d="M602.5 303.5v5 M602.5 333.3h25.9 M602.5 333.3l-4.5 3.2" stroke="#555" stroke-width="1" fill="none"/>
<path d="M596.7 310.5 l2 -2 H606.3 l-2 2z" fill="#fff" stroke="#555" stroke-width="0.9"/>
<path d="M604.3 310.5 l2 -2 H618.5 l-2 2z" fill="#9cc6ee" stroke="#2e7dc4" stroke-width="0.9"/>
<path d="M616.5 310.5 l2 -2 V315.2 l-2 2z" fill="#5b9bd5" stroke="#2e7dc4" stroke-width="0.9"/>
<rect x="596.7" y="310.5" width="7.60" height="6.70" fill="#fff" stroke="#555" stroke-width="0.9"/>
<rect x="604.3" y="310.5" width="12.20" height="6.70" fill="#9cc6ee" stroke="#2e7dc4" stroke-width="0.9"/>
<path d="M596.7 322 l2 -2 H612.5 l-2 2z" fill="#fff" stroke="#555" stroke-width="0.9"/>
<path d="M610.5 322 l2 -2 H625.5 l-2 2z" fill="#9cc6ee" stroke="#2e7dc4" stroke-width="0.9"/>
<path d="M623.5 322 l2 -2 V327.2 l-2 2z" fill="#5b9bd5" stroke="#2e7dc4" stroke-width="0.9"/>
<rect x="596.7" y="322" width="13.80" height="7.20" fill="#fff" stroke="#555" stroke-width="0.9"/>
<rect x="610.5" y="322" width="13.00" height="7.20" fill="#9cc6ee" stroke="#2e7dc4" stroke-width="0.9"/>
<path d="M643.5 303.5v5 M643.5 333.3h26.5 M643.5 333.3l-4.5 3.2" stroke="#555" stroke-width="1" fill="none"/>
<path d="M638.2 310.5 l2 -2 H647.3 l-2 2z" fill="#fff" stroke="#555" stroke-width="0.9"/>
<path d="M645.3 310.5 l2 -2 H665.5 l-2 2z" fill="#9cc6ee" stroke="#2e7dc4" stroke-width="0.9"/>
<path d="M663.5 310.5 l2 -2 V315.2 l-2 2z" fill="#5b9bd5" stroke="#2e7dc4" stroke-width="0.9"/>
<rect x="638.2" y="310.5" width="7.10" height="6.70" fill="#fff" stroke="#555" stroke-width="0.9"/>
<rect x="645.3" y="310.5" width="18.20" height="6.70" fill="#9cc6ee" stroke="#2e7dc4" stroke-width="0.9"/>
<path d="M638.2 322 l2 -2 H653.5 l-2 2z" fill="#fff" stroke="#555" stroke-width="0.9"/>
<path d="M651.5 322 l2 -2 H665.5 l-2 2z" fill="#9cc6ee" stroke="#2e7dc4" stroke-width="0.9"/>
<path d="M663.5 322 l2 -2 V327.2 l-2 2z" fill="#5b9bd5" stroke="#2e7dc4" stroke-width="0.9"/>
<rect x="638.2" y="322" width="13.30" height="7.20" fill="#fff" stroke="#555" stroke-width="0.9"/>
<rect x="651.5" y="322" width="12.00" height="7.20" fill="#9cc6ee" stroke="#2e7dc4" stroke-width="0.9"/>
<path d="M558.8 354v11h12" stroke="#555" stroke-width="1" fill="none"/>
<rect x="560.5" y="356.5" width="2.00" height="8.50" fill="#9cc6ee" stroke="#2e7dc4" stroke-width="0.8"/>
<rect x="563.5" y="354.5" width="2.00" height="10.50" fill="#fff" stroke="#555" stroke-width="0.8"/>
<rect x="566.5" y="358.5" width="2.00" height="6.50" fill="#fff" stroke="#555" stroke-width="0.8"/>
</svg>
<div class="t" style="left:578px;top:355.80px;font-size:9px;color:#404040;letter-spacing:-0.1px;"><u>M</u>ore Column Charts...</div>
<svg width="730" height="410">
<rect x="545" y="45" width="33" height="26.5" fill="#e8060e"/>
<rect x="548.5" y="48.5" width="26" height="19.5" fill="#c8c8c8"/>
<rect x="551.5" y="55.5" width="3.5" height="8" fill="#d8d8d8" stroke="#666" stroke-width="0.9"/>
<rect x="555" y="50.5" width="4" height="13" fill="#fff" stroke="#666" stroke-width="0.9"/>
<rect x="559" y="53.5" width="3.5" height="10" fill="#69a8e0" stroke="#2e7dc4" stroke-width="0.9"/>
<path d="M566.6 57.2l2 2 2-2" fill="none" stroke="#333" stroke-width="1.15"/>
</svg>
</body></html>
